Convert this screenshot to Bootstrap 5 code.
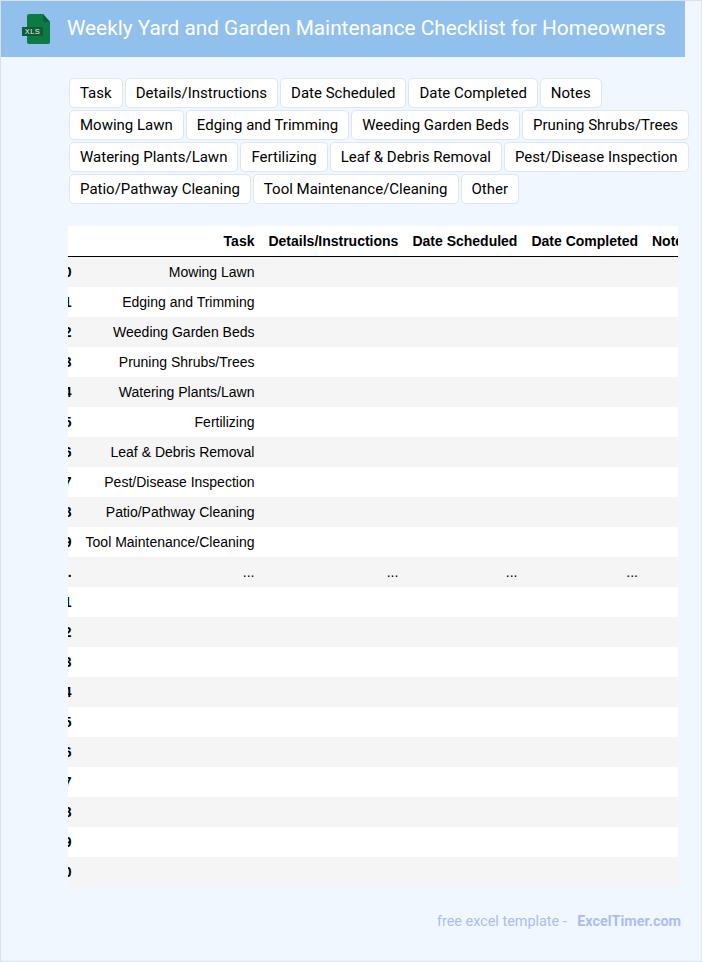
<!DOCTYPE html>
<html lang="en">
<head>
<meta charset="utf-8">
<title>Weekly Yard and Garden Maintenance Checklist for Homeowners</title>
<link href="https://cdn.jsdelivr.net/npm/bootstrap@5.3.0/dist/css/bootstrap.min.css" rel="stylesheet">
<style>
html,body{height:100%;margin:0;overflow:hidden}
body{background:#f0f7ff;font-family:Roboto,sans-serif;color:#000}
.page-frame{height:962px;border:1px solid #d8e2ef;background:#f0f7ff}
.head-bar{width:684px;height:56px;background:#92c0ed;padding-left:21px}
.head-title{font:400 20.77px/1.2 Roboto,sans-serif;color:#fff;margin:0 0 2px;padding-left:16px;white-space:nowrap}
.pill-wrap{width:623px;margin:20px 0 0 67px}
.pill-item{display:block;height:30px;margin:1px;padding:0 10px;background:#fff;border:1px solid #dde6f2;border-radius:5px;font:400 15px/28px Roboto,sans-serif;color:#000;white-space:nowrap}
.sheet-clip{width:610px;height:661px;margin:21px 0 0 67px;overflow:hidden}
.sheet{margin-left:-19px;border-collapse:separate;border-spacing:0;background:#fff;font:400 14px/16px "Liberation Sans",Arial,sans-serif;color:#000;white-space:nowrap}
.sheet th,.sheet td{height:30px;padding:0 7px;text-align:right;vertical-align:middle;border:0}
.sheet thead th{height:31px;font-weight:700;border-bottom:1px solid #000}
.sheet tbody tr:nth-child(odd){background:#f5f5f5}
.sheet tbody th{font-weight:700}
.foot-line{width:680px;margin-top:25px;font:400 14.4px/20px Roboto,sans-serif;color:#abbdf0;text-align:right}
.foot-line b{font-weight:700;margin-left:7px}
</style>
</head>
<body>
<div class="page-frame">
  <header class="head-bar d-flex align-items-center">
    <svg width="29" height="31" viewBox="0 0 29 31" aria-hidden="true">
      <path d="M7 0h14l7 8v20a2 2 0 0 1-2 2H7a2 2 0 0 1-2-2V2a2 2 0 0 1 2-2z" fill="#0b7a43"/>
      <path d="M21 0l7 8h-5a2 2 0 0 1-2-2z" fill="#0a5f35"/>
      <rect x="0" y="13" width="21" height="9" fill="#0d5c35"/>
      <text x="10.5" y="20.4" text-anchor="middle" font-family="Liberation Sans,sans-serif" font-size="7.5" letter-spacing=".5" fill="#e6f5ec">XLS</text>
    </svg>
    <h1 class="head-title">Weekly Yard and Garden Maintenance Checklist for Homeowners</h1>
  </header>

  <div class="pill-wrap d-flex flex-wrap">
    <span class="pill-item">Task</span>
    <span class="pill-item">Details/Instructions</span>
    <span class="pill-item">Date Scheduled</span>
    <span class="pill-item">Date Completed</span>
    <span class="pill-item">Notes</span>
    <span class="pill-item">Mowing Lawn</span>
    <span class="pill-item">Edging and Trimming</span>
    <span class="pill-item">Weeding Garden Beds</span>
    <span class="pill-item">Pruning Shrubs/Trees</span>
    <span class="pill-item">Watering Plants/Lawn</span>
    <span class="pill-item">Fertilizing</span>
    <span class="pill-item">Leaf &amp; Debris Removal</span>
    <span class="pill-item">Pest/Disease Inspection</span>
    <span class="pill-item">Patio/Pathway Cleaning</span>
    <span class="pill-item">Tool Maintenance/Cleaning</span>
    <span class="pill-item">Other</span>
  </div>

  <div class="sheet-clip">
    <table class="sheet">
      <thead>
        <tr><th></th><th>Task</th><th>Details/Instructions</th><th>Date Scheduled</th><th>Date Completed</th><th>Notes</th></tr>
      </thead>
      <tbody>
        <tr><th>0</th><td>Mowing Lawn</td><td></td><td></td><td></td><td></td></tr>
        <tr><th>1</th><td>Edging and Trimming</td><td></td><td></td><td></td><td></td></tr>
        <tr><th>2</th><td>Weeding Garden Beds</td><td></td><td></td><td></td><td></td></tr>
        <tr><th>3</th><td>Pruning Shrubs/Trees</td><td></td><td></td><td></td><td></td></tr>
        <tr><th>4</th><td>Watering Plants/Lawn</td><td></td><td></td><td></td><td></td></tr>
        <tr><th>5</th><td>Fertilizing</td><td></td><td></td><td></td><td></td></tr>
        <tr><th>6</th><td>Leaf &amp; Debris Removal</td><td></td><td></td><td></td><td></td></tr>
        <tr><th>7</th><td>Pest/Disease Inspection</td><td></td><td></td><td></td><td></td></tr>
        <tr><th>8</th><td>Patio/Pathway Cleaning</td><td></td><td></td><td></td><td></td></tr>
        <tr><th>9</th><td>Tool Maintenance/Cleaning</td><td></td><td></td><td></td><td></td></tr>
        <tr><th>...</th><td>...</td><td>...</td><td>...</td><td>...</td><td>...</td></tr>
        <tr><th>11</th><td></td><td></td><td></td><td></td><td></td></tr>
        <tr><th>12</th><td></td><td></td><td></td><td></td><td></td></tr>
        <tr><th>13</th><td></td><td></td><td></td><td></td><td></td></tr>
        <tr><th>14</th><td></td><td></td><td></td><td></td><td></td></tr>
        <tr><th>15</th><td></td><td></td><td></td><td></td><td></td></tr>
        <tr><th>16</th><td></td><td></td><td></td><td></td><td></td></tr>
        <tr><th>17</th><td></td><td></td><td></td><td></td><td></td></tr>
        <tr><th>18</th><td></td><td></td><td></td><td></td><td></td></tr>
        <tr><th>19</th><td></td><td></td><td></td><td></td><td></td></tr>
        <tr><th>20</th><td></td><td></td><td></td><td></td><td></td></tr>
      </tbody>
    </table>
  </div>

  <footer class="foot-line">free excel template - <b>ExcelTimer.com</b></footer>
</div>
<script src="https://cdn.jsdelivr.net/npm/bootstrap@5.3.0/dist/js/bootstrap.bundle.min.js"></script>
</body>
</html>
